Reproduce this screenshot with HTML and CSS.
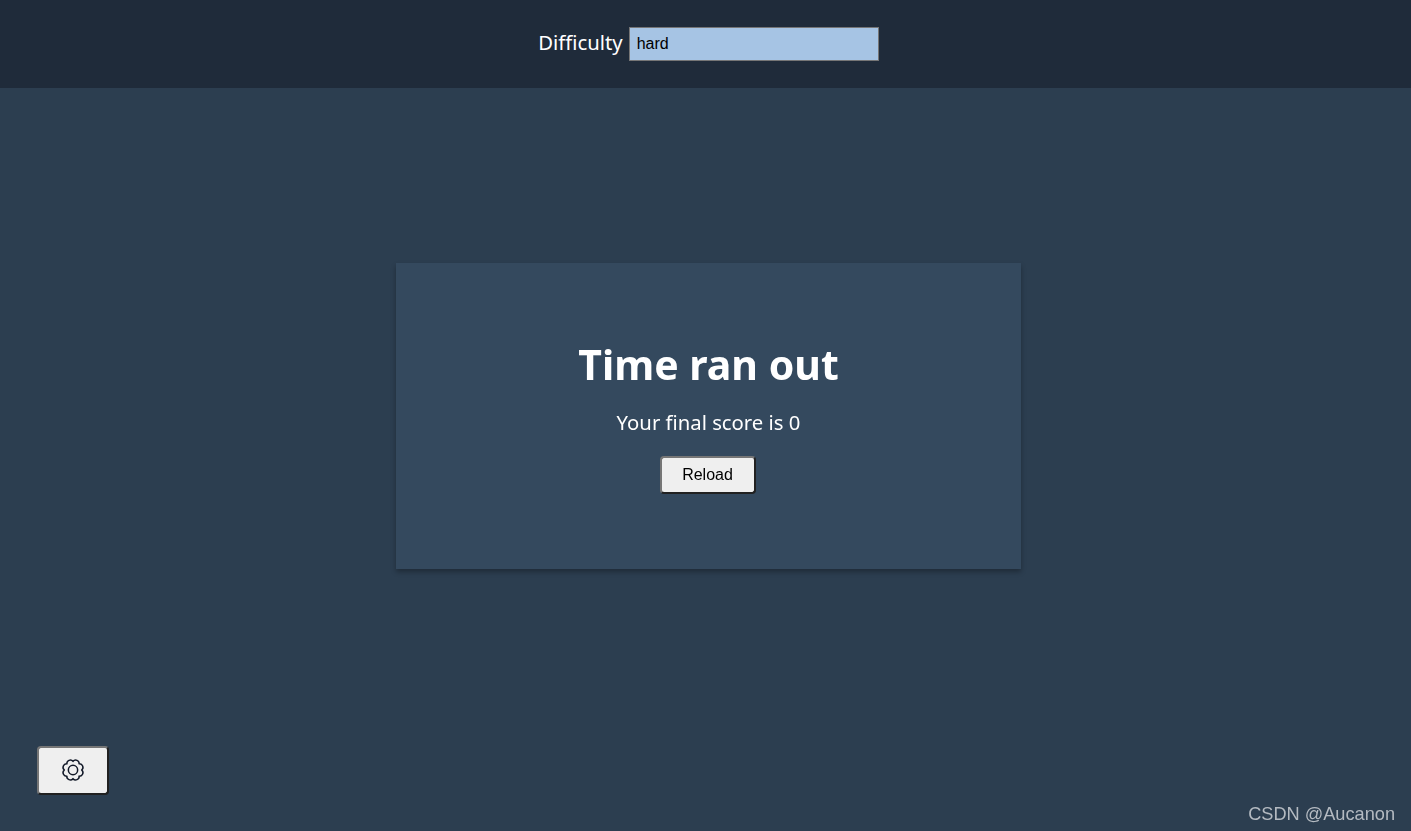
FILE: index.html
```html
<!DOCTYPE html>
<html lang="en">
<head>
  <meta charset="UTF-8">
  <title>Speed Typer</title>
  <link rel="stylesheet" href="styles.css">
</head>
<body>

  <div class="settings">
    <form class="difficulty-form">
      <label for="difficulty">Difficulty</label>
      <input type="text" id="difficulty" value="hard">
    </form>
  </div>

  <div class="end-overlay">
    <div class="end-card">
      <h1>Time ran out</h1>
      <p>Your final score is 0</p>
      <button type="button" class="reload-btn">Reload</button>
    </div>
  </div>

  <button type="button" class="settings-btn" aria-label="Settings">
    <svg class="gear" width="26" height="26" viewBox="0 0 24 24" fill="none" stroke="#111827" stroke-width="1.4" stroke-linejoin="round">
      <path d="M12 4A3.200 3.200 0 0 1 17.660 6.340A3.200 3.200 0 0 1 20 12A3.200 3.200 0 0 1 17.660 17.660A3.200 3.200 0 0 1 12 20A3.200 3.200 0 0 1 6.340 17.660A3.200 3.200 0 0 1 4 12A3.200 3.200 0 0 1 6.340 6.340A3.200 3.200 0 0 1 12 4z"/>
      <circle cx="12" cy="12" r="4.300"/>
    </svg>
  </button>

  <span class="watermark">CSDN @Aucanon</span>

</body>
</html>
```

FILE: styles.css
```css
* {
  box-sizing: border-box;
}
body {
  margin: 0;
  height: 831px;
  background: #2c3e50;
  color: #fff;
  font-family: 'Noto Sans', sans-serif;
  overflow: hidden;
}
.settings {
  height: 88px;
  padding-left: 6px;
  background: #1f2b3a;
  display: flex;
  align-items: center;
  justify-content: center;
}
.difficulty-form {
  display: flex;
  align-items: center;
  gap: 6px;
}
.difficulty-form label {
  padding-bottom: 4px;
  font-size: 20.3px;
}
.difficulty-form input {
  width: 250px;
  height: 34px;
  padding: 0 7px;
  border: 1px solid #767676;
  background: #a6c4e4;
  color: #000;
  font-family: 'Liberation Sans', sans-serif;
  font-size: 16px;
}
.end-overlay {
  position: fixed;
  inset: 0;
  padding-left: 6px;
  display: flex;
  align-items: center;
  justify-content: center;
}
.end-card {
  width: 625px;
  height: 306px;
  background: #34495e;
  box-shadow: 0 3px 5px rgba(0,0,0,0.3);
  display: flex;
  flex-direction: column;
  align-items: center;
  justify-content: center;
}
.end-card h1 {
  margin: 0;
  font-size: 41px;
  line-height: 54px;
  font-weight: 700;
}
.end-card p {
  margin: 18px 0 20px;
  font-size: 20.3px;
  line-height: 27px;
}
.reload-btn {
  width: 96px;
  height: 38px;
  margin-right: 2px;
  background: #efefef;
  border: 2px outset #767676;
  border-radius: 4px;
  color: #000;
  font-family: 'Liberation Sans', sans-serif;
  font-size: 16px;
  padding: 0;
}
.settings-btn {
  position: fixed;
  left: 37px;
  bottom: 36px;
  width: 72px;
  height: 49px;
  display: flex;
  align-items: center;
  justify-content: center;
  background: #efefef;
  border: 2px outset #767676;
  border-radius: 4px;
  padding: 0;
}
.gear {
  margin-bottom: 1px;
}
.watermark {
  position: fixed;
  right: 16px;
  bottom: 6px;
  font-family: 'Liberation Sans', sans-serif;
  font-size: 18.2px;
  color: #b4bac1;
}
```
